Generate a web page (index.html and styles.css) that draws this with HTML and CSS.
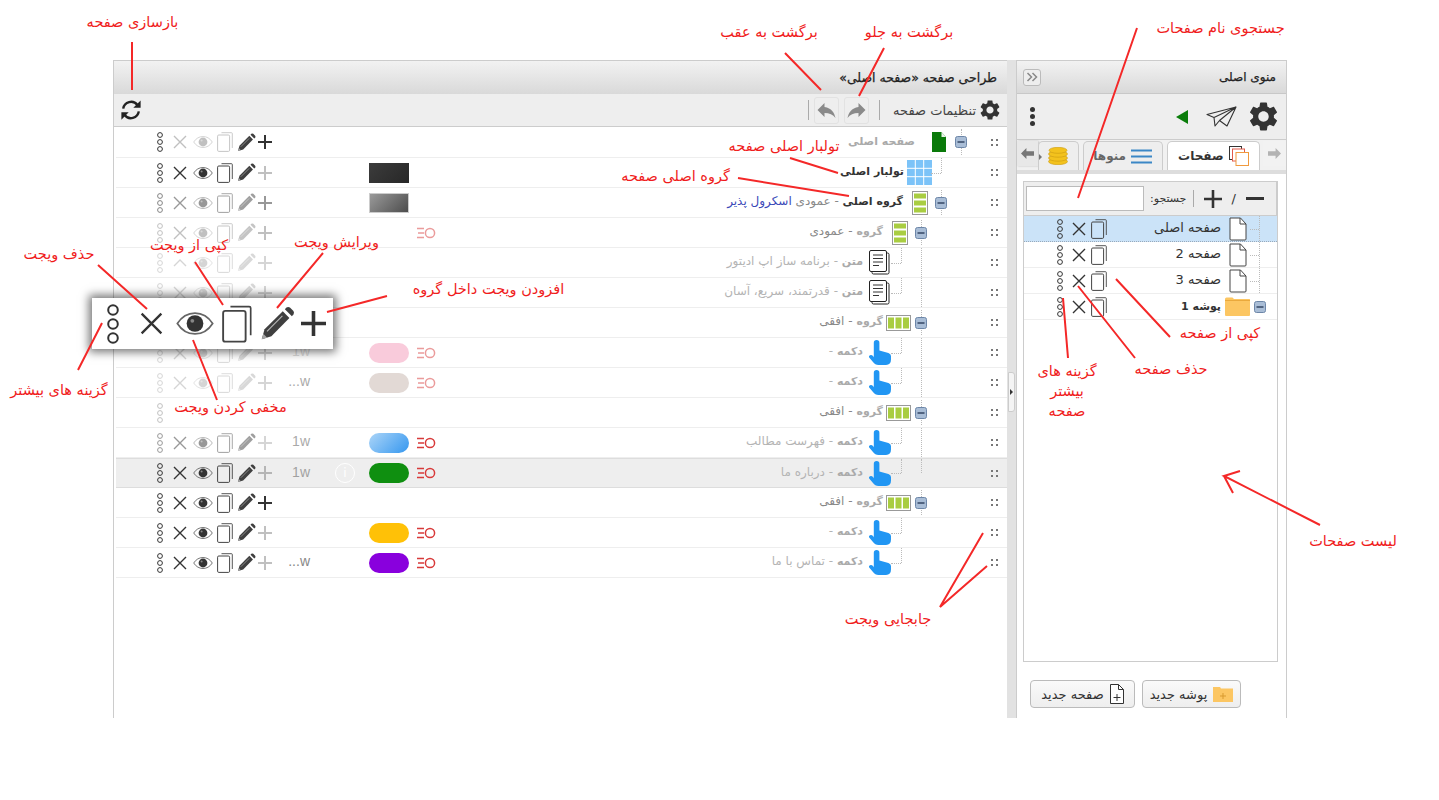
FILE: index.html
```html
<!DOCTYPE html>
<html lang="fa">
<head>
    <meta charset="UTF-8">
    <title>طراحی صفحه</title>
    <link rel="stylesheet" href="styles.css">
</head>
<body>

<svg class="defs" aria-hidden="true">
    <symbol id="gear" viewBox="2 2 20 20"><path d="M19.14 12.94c.04-.3.06-.61.06-.94 0-.32-.02-.64-.07-.94l2.03-1.58c.18-.14.23-.41.12-.61l-1.92-3.32c-.12-.22-.37-.29-.59-.22l-2.39.96c-.5-.38-1.03-.7-1.62-.94l-.36-2.54c-.04-.24-.24-.41-.48-.41h-3.84c-.24 0-.43.17-.47.41l-.36 2.54c-.59.24-1.13.57-1.62.94l-2.39-.96c-.22-.08-.47 0-.59.22L2.74 8.87c-.12.21-.08.47.12.61l2.03 1.58c-.05.3-.09.63-.09.94s.02.64.07.94l-2.03 1.58c-.18.14-.23.41-.12.61l1.92 3.32c.12.22.37.29.59.22l2.39-.96c.5.38 1.03.7 1.62.94l.36 2.54c.05.24.24.41.48.41h3.84c.24 0 .44-.17.47-.41l.36-2.54c.59-.24 1.13-.56 1.62-.94l2.39.96c.22.08.47 0 .59-.22l1.92-3.32c.12-.22.07-.47-.12-.61l-2.01-1.58zM12 15.6c-1.98 0-3.6-1.62-3.6-3.6s1.62-3.6 3.6-3.6 3.6 1.62 3.6 3.6-1.62 3.6-3.6 3.6z" fill="#333"/></symbol>
    <symbol id="dots" viewBox="0 0 10 20"><g fill="none" stroke="#333" stroke-width="1"><circle cx="5" cy="3" r="2.4"/><circle cx="5" cy="10" r="2.4"/><circle cx="5" cy="17" r="2.4"/></g></symbol>
    <symbol id="cross" viewBox="0 0 14 14"><path d="M1 1l12 12M13 1L1 13" stroke="#333" stroke-width="1.4" fill="none"/></symbol>
    <symbol id="eye" viewBox="0 0 20 14"><path d="M.7 7C3 3.4 6.300 1.500 10 1.500S17 3.400 19.300 7C17 10.600 13.700 12.500 10 12.500S3 10.600 .7 7z" fill="none" stroke="#666" stroke-width=".9"/><circle cx="10" cy="7" r="4.400" fill="#333"/><circle cx="8.600" cy="5.600" r="1" fill="#888"/></symbol>
    <symbol id="copy" viewBox="0 0 16 20"><path d="M4.500 .7h10q.8 0 .8 .8v14.500" fill="none" stroke="#444" stroke-width=".9"/><rect x=".6" y="3" width="12" height="16.400" rx="1.200" fill="#fff" fill-opacity="0" stroke="#444" stroke-width="1"/></symbol>
    <symbol id="pencil" viewBox="0 0 20 20"><path d="M1 19l1.600-5.700L13 3l3.800 3.800L6.500 17.300z" fill="#3f3f3f"/><path d="M4 14.500l8.800-8.800" stroke="#bbb" stroke-width=".6"/><path d="M1 19l.9-3.100 2.200 2.200z" fill="#a5a5a5"/><path d="M14.200 1.800l.9-.9q1-.7 2 0l2 2q.7 1 0 2l-.9.9z" fill="#3f3f3f"/></symbol>
    <symbol id="plus" viewBox="0 0 14 14"><path d="M7 0v14M0 7h14" stroke="#333" stroke-width="2" fill="none"/></symbol>
    <symbol id="caret" viewBox="0 0 14 14"><path d="M1 10l6-6 6 6" stroke="#333" stroke-width="1.400" fill="none"/></symbol>
    <symbol id="grip" viewBox="0 0 7 7"><path d="M0 0h2v2H0zM5 0h2v2H5zM0 5h2v2H0zM5 5h2v2H5z" fill="#777"/></symbol>
    <symbol id="minus" viewBox="0 0 12 12"><rect x=".5" y=".5" width="11" height="11" rx="2" fill="#a9bdd6" stroke="#6d86a8"/><path d="M2.500 6h7" stroke="#2c3e5c" stroke-width="1.400"/></symbol>
    <symbol id="anim" viewBox="0 0 19 14"><path d="M0 2.500h7M1 7h6M0 11.500h7" stroke="#d83a3a" stroke-width="1.400" fill="none"/><circle cx="13" cy="7" r="4.600" fill="none" stroke="#d83a3a" stroke-width="1.500"/></symbol>
    <symbol id="page" viewBox="0 0 18 24"><path d="M1 1h10.500L17 7v15q0 1-1 1H2q-1 0-1-1z" fill="#fff" stroke="#444" stroke-width="1"/><path d="M11 1v6h6" fill="none" stroke="#444" stroke-width="1"/></symbol>
    <symbol id="greenpage" viewBox="0 0 14 20"><path d="M0 0h9.500L14 5v15H0z" fill="#0a7a0a"/><path d="M9.500 0v5H14" fill="#e8f3e8"/></symbol>
    <symbol id="textdoc" viewBox="0 0 21 25"><rect x="3" y="3" width="17" height="21" rx="1.500" fill="#fff" stroke="#222"/><rect x=".5" y=".5" width="17" height="21" rx="1.500" fill="#fff" stroke="#222"/><path d="M4 5h10M4 8.500h10M4 12h10M4 15.500h6" stroke="#333"/></symbol>
    <symbol id="gridbox" viewBox="0 0 25 25"><path d="M0 0h25v25H0z" fill="#7cc3f8"/><path d="M8.300 0v25M16.700 0v25M0 8.300h25M0 16.700h25" stroke="#fff" stroke-width="1"/></symbol>
    <symbol id="vgroup" viewBox="0 0 16 24"><rect x=".5" y=".5" width="15" height="23" fill="#fff" stroke="#999"/><path d="M2 2.500h12V7.500H2zM2 9.500h12V14.500H2zM2 16.500h12V21.500H2z" fill="#a9cd41"/></symbol>
    <symbol id="hgroup" viewBox="0 0 25 16"><rect x=".5" y=".5" width="24" height="15" fill="#fff" stroke="#999"/><path d="M2 2.500h6v11H2zM9.500 2.500h6v11H9.500zM17 2.500h6v11h-6z" fill="#a9cd41"/></symbol>
    <symbol id="hand" viewBox="0 0 22 25"><path d="M4.800 2.800a2.800 2.800 0 0 1 5.600 0v7.600l9 2.600q2.600 .8 2.600 3v3.500q0 5-5 5.500H9.500q-3.500 0-5.500-3L.2 17.500q-.8-1.600.8-2.300t3 .8l.8 1.200z" fill="#2196f3"/></symbol>
    <symbol id="folder" viewBox="0 0 25 19"><path d="M0 2q0-1.500 1.500-1.500h6L9 2h15.500q.5 0 .5 .5V18q0 1-1 1H1q-1 0-1-1z" fill="#fcc662"/><path d="M0 3.500h25" stroke="#eaa93c"/></symbol>
    <symbol id="reply" viewBox="3 5 18 15"><path d="M10 9V5l-7 7 7 7v-4.100c5 0 8.500 1.600 11 5.100-1-5-4-10-11-11z" fill="#8a8a8a"/></symbol>
    <symbol id="refresh" viewBox="0 0 24 24"><g fill="none" stroke="#222" stroke-width="2.600"><path d="M3.500 10.500A8.700 8.700 0 0 1 19 6.500"/><path d="M20.500 13.500A8.700 8.700 0 0 1 5 17.500"/></g><path d="M22.500 1.500v8h-8zM1.500 22.500v-8h8z" fill="#222"/></symbol>
    <symbol id="plane" viewBox="0 0 31 21"><path d="M1 8.500L30 1l-9 19-7.500-5.500L9 20l-1-8.500zM30 1L8 11.500M30 1L13.500 14.500" fill="none" stroke="#333" stroke-width="1.100" stroke-linejoin="round"/></symbol>
    <symbol id="pages" viewBox="0 0 20 20"><rect x=".5" y=".5" width="12" height="13" fill="#fff" stroke="#333"/><rect x="3.500" y="3" width="12" height="12" fill="#fff" stroke="#e25b4a"/><rect x="7" y="6.500" width="12.500" height="13" fill="#fff" stroke="#f09a3e"/></symbol>
    <symbol id="menuicon" viewBox="0 0 21 15"><path d="M0 1.500h21M0 7.500h21M0 13.500h21" stroke="#3b87c6" stroke-width="2"/></symbol>
    <symbol id="coins" viewBox="0 0 20 18"><g fill="#f3c21d" stroke="#cb9a10" stroke-width=".6"><ellipse cx="10" cy="14.500" rx="9.500" ry="3.200"/><ellipse cx="10" cy="11" rx="9.500" ry="3.200"/><ellipse cx="10" cy="7" rx="9.500" ry="3.200"/><ellipse cx="10" cy="3.300" rx="9" ry="3"/></g></symbol>
    <symbol id="arrowh" viewBox="0 0 12 10"><path d="M0 5l5-5v3h7v4H5v3z" fill="#777"/></symbol>
    <symbol id="chev" viewBox="0 0 12 10"><path d="M1.500 1l4 4-4 4M6.500 1l4 4-4 4" fill="none" stroke="#888" stroke-width="1.500"/></symbol>
    <symbol id="newpage" viewBox="0 0 14 20"><path d="M.5 .5h8l5 5v14H.5z" fill="#fff" stroke="#333"/><path d="M8.500 .5v5h5M7 10v7M3.500 13.500h7" fill="none" stroke="#333"/></symbol>
    <symbol id="newfolder" viewBox="0 0 20 16"><path d="M0 1h7l1 1.500h12V16H0z" fill="#fcc662"/><path d="M10 7v6M7 10h6" stroke="#d99a2f"/></symbol>
</svg>

<div class="app">
    <section class="designer">
        <header class="title-bar"><span class="title title-long">طراحی صفحه «صفحه اصلی»</span></header>
        <div class="tool-bar">
            <svg class="refresh"><use href="#refresh"/></svg>
            <div class="tool-group">
                <span class="sep"></span>
                <span class="hist-btn"><svg class="hist"><use href="#reply"/></svg></span>
                <span class="hist-btn"><svg class="hist mirror"><use href="#reply"/></svg></span>
                <span class="sep sep-wide"></span>
                <span class="settings">تنظیمات صفحه</span>
                <svg class="gear"><use href="#gear"/></svg>
            </div>
        </div>

        <div class="rows">
            <div class="row row-first">
                <div class="acts">
                    <svg class="i-dots"><use href="#dots"/></svg><svg class="i-x o3"><use href="#cross"/></svg><svg class="i-eye o3"><use href="#eye"/></svg><svg class="i-copy o3"><use href="#copy"/></svg><svg class="i-pen"><use href="#pencil"/></svg><svg class="i-plus"><use href="#plus"/></svg>
                </div>
                <div class="size"></div><div class="info"></div><div class="swatch none"></div><div class="anim"></div>
                <div class="tree">
                    <svg class="grip"><use href="#grip"/></svg>
                    <span class="slot toggle"><svg class="tgl"><use href="#minus"/></svg></span>
                    <span class="ico ico-root"><svg class="i-green"><use href="#greenpage"/></svg></span>
                    <span class="lbl"><b class="muted">صفحه اصلی</b></span>
                </div>
            </div>

            <div class="row">
                <div class="acts">
                    <svg class="i-dots"><use href="#dots"/></svg><svg class="i-x"><use href="#cross"/></svg><svg class="i-eye"><use href="#eye"/></svg><svg class="i-copy"><use href="#copy"/></svg><svg class="i-pen"><use href="#pencil"/></svg><svg class="i-plus o3"><use href="#plus"/></svg>
                </div>
                <div class="size"></div><div class="info"></div><div class="swatch sw-dark"></div><div class="anim"></div>
                <div class="tree">
                    <svg class="grip"><use href="#grip"/></svg>
                    <span class="slot"></span>
                    <span class="slot stub"></span>
                    <span class="ico ico-grid"><svg class="i-grid"><use href="#gridbox"/></svg></span>
                    <span class="lbl"><b>تولبار اصلی</b></span>
                </div>
            </div>

            <div class="row">
                <div class="acts">
                    <svg class="i-dots o6"><use href="#dots"/></svg><svg class="i-x o5"><use href="#cross"/></svg><svg class="i-eye o5"><use href="#eye"/></svg><svg class="i-copy o5"><use href="#copy"/></svg><svg class="i-pen o5"><use href="#pencil"/></svg><svg class="i-plus o5"><use href="#plus"/></svg>
                </div>
                <div class="size"></div><div class="info"></div><div class="swatch sw-gray"></div><div class="anim"></div>
                <div class="tree">
                    <svg class="grip"><use href="#grip"/></svg>
                    <span class="slot"></span>
                    <span class="slot toggle"><svg class="tgl"><use href="#minus"/></svg></span>
                    <span class="ico"><svg class="i-v"><use href="#vgroup"/></svg></span>
                    <span class="lbl"><b>گروه اصلی</b> <span class="sub">- عمودی</span> <span class="link">اسکرول پذیر</span></span>
                </div>
            </div>

            <div class="row">
                <div class="acts">
                    <svg class="i-dots o3"><use href="#dots"/></svg><svg class="i-x o3"><use href="#cross"/></svg><svg class="i-eye o3"><use href="#eye"/></svg><svg class="i-copy o3"><use href="#copy"/></svg><svg class="i-pen o3"><use href="#pencil"/></svg><svg class="i-plus o3"><use href="#plus"/></svg>
                </div>
                <div class="size"></div><div class="info"></div><div class="swatch none"></div><svg class="anim o5"><use href="#anim"/></svg>
                <div class="tree">
                    <svg class="grip"><use href="#grip"/></svg>
                    <span class="slot"></span>
                    <span class="slot"></span>
                    <span class="slot toggle"><svg class="tgl"><use href="#minus"/></svg></span>
                    <span class="ico"><svg class="i-v"><use href="#vgroup"/></svg></span>
                    <span class="lbl"><b class="muted">گروه</b> <span class="sub">- عمودی</span></span>
                </div>
            </div>

            <div class="row">
                <div class="acts">
                    <svg class="i-dots o2"><use href="#dots"/></svg><svg class="i-x o2"><use href="#caret"/></svg><svg class="i-eye o2"><use href="#eye"/></svg><svg class="i-copy o2"><use href="#copy"/></svg><svg class="i-pen o2"><use href="#pencil"/></svg><svg class="i-plus o2"><use href="#plus"/></svg>
                </div>
                <div class="size"></div><div class="info"></div><div class="swatch none"></div><div class="anim"></div>
                <div class="tree">
                    <svg class="grip"><use href="#grip"/></svg>
                    <span class="slot"></span>
                    <span class="slot"></span>
                    <span class="slot line"></span>
                    <span class="slot stub"></span>
                    <span class="ico ico-text"><svg class="i-text"><use href="#textdoc"/></svg></span>
                    <span class="lbl faded"><b class="muted">متن</b> - برنامه ساز اپ ادیتور</span>
                </div>
            </div>

            <div class="row">
                <div class="acts">
                    <svg class="i-dots o2"><use href="#dots"/></svg><svg class="i-x o2"><use href="#cross"/></svg><svg class="i-eye o2"><use href="#eye"/></svg><svg class="i-copy o2"><use href="#copy"/></svg><svg class="i-pen o2"><use href="#pencil"/></svg><svg class="i-plus o2"><use href="#plus"/></svg>
                </div>
                <div class="size"></div><div class="info"></div><div class="swatch none"></div><div class="anim"></div>
                <div class="tree">
                    <svg class="grip"><use href="#grip"/></svg>
                    <span class="slot"></span>
                    <span class="slot"></span>
                    <span class="slot line"></span>
                    <span class="slot stub"></span>
                    <span class="ico ico-text"><svg class="i-text"><use href="#textdoc"/></svg></span>
                    <span class="lbl faded"><b class="muted">متن</b> - قدرتمند، سریع، آسان</span>
                </div>
            </div>

            <div class="row">
                <div class="acts"></div>
                <div class="size"></div><div class="info"></div><div class="swatch none"></div><div class="anim"></div>
                <div class="tree">
                    <svg class="grip"><use href="#grip"/></svg>
                    <span class="slot"></span>
                    <span class="slot"></span>
                    <span class="slot toggle"><svg class="tgl"><use href="#minus"/></svg></span>
                    <span class="ico ico-h"><svg class="i-h"><use href="#hgroup"/></svg></span>
                    <span class="lbl"><b class="muted">گروه</b> <span class="sub">- افقی</span></span>
                </div>
            </div>

            <div class="row">
                <div class="acts">
                    <svg class="i-dots o2"><use href="#dots"/></svg><svg class="i-x o2"><use href="#cross"/></svg><svg class="i-eye o2"><use href="#eye"/></svg><svg class="i-copy o2"><use href="#copy"/></svg><svg class="i-pen o2"><use href="#pencil"/></svg><svg class="i-plus o2"><use href="#plus"/></svg>
                </div>
                <div class="size o2">1w</div><div class="info"></div><div class="swatch sw-pink"></div><svg class="anim o5"><use href="#anim"/></svg>
                <div class="tree">
                    <svg class="grip"><use href="#grip"/></svg>
                    <span class="slot"></span>
                    <span class="slot"></span>
                    <span class="slot line"></span>
                    <span class="slot stub"></span>
                    <span class="ico ico-hand"><svg class="i-hand"><use href="#hand"/></svg></span>
                    <span class="lbl faded"><b class="muted">دکمه</b> -</span>
                </div>
            </div>

            <div class="row">
                <div class="acts">
                    <svg class="i-dots o2"><use href="#dots"/></svg><svg class="i-x o2"><use href="#cross"/></svg><svg class="i-eye o2"><use href="#eye"/></svg><svg class="i-copy o2"><use href="#copy"/></svg><svg class="i-pen o2"><use href="#pencil"/></svg><svg class="i-plus o2"><use href="#plus"/></svg>
                </div>
                <div class="size o5">...w</div><div class="info"></div><div class="swatch sw-sand"></div><svg class="anim o5"><use href="#anim"/></svg>
                <div class="tree">
                    <svg class="grip"><use href="#grip"/></svg>
                    <span class="slot"></span>
                    <span class="slot"></span>
                    <span class="slot line"></span>
                    <span class="slot stub"></span>
                    <span class="ico ico-hand"><svg class="i-hand"><use href="#hand"/></svg></span>
                    <span class="lbl faded"><b class="muted">دکمه</b> -</span>
                </div>
            </div>

            <div class="row">
                <div class="acts">
                    <svg class="i-dots o3"><use href="#dots"/></svg>
                </div>
                <div class="size"></div><div class="info"></div><div class="swatch none"></div><div class="anim"></div>
                <div class="tree">
                    <svg class="grip"><use href="#grip"/></svg>
                    <span class="slot"></span>
                    <span class="slot"></span>
                    <span class="slot toggle"><svg class="tgl"><use href="#minus"/></svg></span>
                    <span class="ico ico-h"><svg class="i-h"><use href="#hgroup"/></svg></span>
                    <span class="lbl"><b class="muted">گروه</b> <span class="sub">- افقی</span></span>
                </div>
            </div>

            <div class="row">
                <div class="acts">
                    <svg class="i-dots o5"><use href="#dots"/></svg><svg class="i-x o5"><use href="#cross"/></svg><svg class="i-eye o5"><use href="#eye"/></svg><svg class="i-copy o5"><use href="#copy"/></svg><svg class="i-pen o5"><use href="#pencil"/></svg><svg class="i-plus o2"><use href="#plus"/></svg>
                </div>
                <div class="size o5">1w</div><div class="info"></div><div class="swatch sw-blue"></div><svg class="anim"><use href="#anim"/></svg>
                <div class="tree">
                    <svg class="grip"><use href="#grip"/></svg>
                    <span class="slot"></span>
                    <span class="slot"></span>
                    <span class="slot line"></span>
                    <span class="slot stub"></span>
                    <span class="ico ico-hand"><svg class="i-hand"><use href="#hand"/></svg></span>
                    <span class="lbl faded"><b class="muted">دکمه</b> - فهرست مطالب</span>
                </div>
            </div>

            <div class="row row-hover">
                <div class="acts">
                    <svg class="i-dots"><use href="#dots"/></svg><svg class="i-x"><use href="#cross"/></svg><svg class="i-eye"><use href="#eye"/></svg><svg class="i-copy"><use href="#copy"/></svg><svg class="i-pen"><use href="#pencil"/></svg><svg class="i-plus o3"><use href="#plus"/></svg>
                </div>
                <div class="size o5">1w</div><div class="info"><span class="info-dot">i</span></div><div class="swatch sw-green"></div><svg class="anim"><use href="#anim"/></svg>
                <div class="tree">
                    <svg class="grip"><use href="#grip"/></svg>
                    <span class="slot"></span>
                    <span class="slot"></span>
                    <span class="slot line-end"></span>
                    <span class="slot stub"></span>
                    <span class="ico ico-hand"><svg class="i-hand"><use href="#hand"/></svg></span>
                    <span class="lbl faded"><b class="muted">دکمه</b> - درباره ما</span>
                </div>
            </div>

            <div class="row">
                <div class="acts">
                    <svg class="i-dots"><use href="#dots"/></svg><svg class="i-x"><use href="#cross"/></svg><svg class="i-eye"><use href="#eye"/></svg><svg class="i-copy"><use href="#copy"/></svg><svg class="i-pen"><use href="#pencil"/></svg><svg class="i-plus"><use href="#plus"/></svg>
                </div>
                <div class="size"></div><div class="info"></div><div class="swatch none"></div><div class="anim"></div>
                <div class="tree">
                    <svg class="grip"><use href="#grip"/></svg>
                    <span class="slot"></span>
                    <span class="slot"></span>
                    <span class="slot toggle"><svg class="tgl"><use href="#minus"/></svg></span>
                    <span class="ico ico-h"><svg class="i-h"><use href="#hgroup"/></svg></span>
                    <span class="lbl"><b class="muted">گروه</b> <span class="sub">- افقی</span></span>
                </div>
            </div>

            <div class="row">
                <div class="acts">
                    <svg class="i-dots"><use href="#dots"/></svg><svg class="i-x"><use href="#cross"/></svg><svg class="i-eye"><use href="#eye"/></svg><svg class="i-copy"><use href="#copy"/></svg><svg class="i-pen"><use href="#pencil"/></svg><svg class="i-plus o3"><use href="#plus"/></svg>
                </div>
                <div class="size"></div><div class="info"></div><div class="swatch sw-amber"></div><svg class="anim"><use href="#anim"/></svg>
                <div class="tree">
                    <svg class="grip"><use href="#grip"/></svg>
                    <span class="slot"></span>
                    <span class="slot"></span>
                    <span class="slot"></span>
                    <span class="slot stub"></span>
                    <span class="ico ico-hand"><svg class="i-hand"><use href="#hand"/></svg></span>
                    <span class="lbl faded"><b class="muted">دکمه</b> -</span>
                </div>
            </div>

            <div class="row">
                <div class="acts">
                    <svg class="i-dots"><use href="#dots"/></svg><svg class="i-x"><use href="#cross"/></svg><svg class="i-eye"><use href="#eye"/></svg><svg class="i-copy"><use href="#copy"/></svg><svg class="i-pen"><use href="#pencil"/></svg><svg class="i-plus o3"><use href="#plus"/></svg>
                </div>
                <div class="size dark">...w</div><div class="info"></div><div class="swatch sw-purple"></div><svg class="anim"><use href="#anim"/></svg>
                <div class="tree">
                    <svg class="grip"><use href="#grip"/></svg>
                    <span class="slot"></span>
                    <span class="slot"></span>
                    <span class="slot"></span>
                    <span class="slot stub"></span>
                    <span class="ico ico-hand"><svg class="i-hand"><use href="#hand"/></svg></span>
                    <span class="lbl faded"><b class="muted">دکمه</b> - تماس با ما</span>
                </div>
            </div>
        </div>
    </section>

    <div class="splitter"><span class="split-tab"></span></div>

    <aside class="side">
        <header class="title-bar side-title">
            <span class="collapse"><svg class="chev"><use href="#chev"/></svg></span>
            <span class="title">منوی اصلی</span>
        </header>
        <div class="side-tools">
            <span class="more-dots"></span>
            <div class="side-tools-r">
                <span class="play"></span>
                <svg class="plane"><use href="#plane"/></svg>
                <svg class="side-gear"><use href="#gear"/></svg>
            </div>
        </div>
        <div class="tabs">
            <span class="tab-arrow tab-arrow-l"><svg class="arr"><use href="#arrowh"/></svg></span>
            <span class="tab tab-coins"><svg class="t-coins"><use href="#coins"/></svg></span>
            <span class="tab tab-menus">منوها <svg class="t-menu"><use href="#menuicon"/></svg></span>
            <span class="tab tab-pages">صفحات <svg class="t-pages"><use href="#pages"/></svg></span>
            <span class="tab-arrow tab-arrow-r"><svg class="arr arr-r"><use href="#arrowh"/></svg></span>
        </div>
        <div class="tab-line"></div>
        <div class="pane">
            <div class="list-box">
                <div class="search-bar">
                    <input class="search" type="text" aria-label="جستجو">
                    <span class="search-lbl">جستجو:</span>
                    <span class="sep2"></span>
                    <svg class="big-plus"><use href="#plus"/></svg>
                    <span class="slash">/</span>
                    <span class="big-minus"></span>
                </div>
                <div class="page-row page-on">
                    <svg class="i-dots"><use href="#dots"/></svg><svg class="p-x"><use href="#cross"/></svg><svg class="p-copy"><use href="#copy"/></svg>
                    <span class="page-name">صفحه اصلی</span>
                    <svg class="i-page"><use href="#page"/></svg>
                    <span class="page-stub"></span>
                </div>
                <div class="page-row">
                    <svg class="i-dots"><use href="#dots"/></svg><svg class="p-x"><use href="#cross"/></svg><svg class="p-copy"><use href="#copy"/></svg>
                    <span class="page-name">صفحه 2</span>
                    <svg class="i-page"><use href="#page"/></svg>
                    <span class="page-stub"></span>
                </div>
                <div class="page-row">
                    <svg class="i-dots"><use href="#dots"/></svg><svg class="p-x"><use href="#cross"/></svg><svg class="p-copy"><use href="#copy"/></svg>
                    <span class="page-name">صفحه 3</span>
                    <svg class="i-page"><use href="#page"/></svg>
                    <span class="page-stub"></span>
                </div>
                <div class="page-row">
                    <svg class="i-dots"><use href="#dots"/></svg><svg class="p-x"><use href="#cross"/></svg><svg class="p-copy"><use href="#copy"/></svg>
                    <span class="page-name folder-name"><b>پوشه 1</b></span>
                    <svg class="i-folder"><use href="#folder"/></svg>
                    <svg class="p-tgl"><use href="#minus"/></svg>
                </div>
            </div>
            <div class="new-btns">
                <button class="btn">صفحه جدید <svg class="b-page"><use href="#newpage"/></svg></button>
                <button class="btn">پوشه جدید <svg class="b-folder"><use href="#newfolder"/></svg></button>
            </div>
        </div>
    </aside>
</div>

<!-- callout over the rows -->
<div class="callout">
    <svg class="c-dots"><use href="#dots"/></svg>
    <svg class="c-x"><use href="#cross"/></svg>
    <svg class="c-eye"><use href="#eye"/></svg>
    <svg class="c-copy"><use href="#copy"/></svg>
    <svg class="c-pen"><use href="#pencil"/></svg>
    <svg class="c-plus"><use href="#plus"/></svg>
</div>

<svg class="lines" viewBox="0 0 1439 800" aria-hidden="true">
    <path d="M132 42V90M785 53L821 90M884 48L859 96M1137 28L1078 198M790 158L838 173M738 178L849 196M1116 279L1170 337M1078 286L1135 358M1063 298L1068 358M1320 525L1224 476L1240 471M1224 476L1233 493M983 533L940 607L987 566M98 265L147 309M195 262L223 305M323 253L277 308M387 296L327 312M102 323L78 370M193 340L217 400" fill="none" stroke="#f42828" stroke-width="2"/>
</svg>

<span class="note n-reload">بازسازی صفحه</span>
<span class="note n-back">برگشت به عقب</span>
<span class="note n-fwd">برگشت به جلو</span>
<span class="note n-search">جستجوی نام صفحات</span>
<span class="note n-toolbar">تولبار اصلی صفحه</span>
<span class="note n-group">گروه اصلی صفحه</span>
<span class="note n-edit">ویرایش ویجت</span>
<span class="note n-copy">کپی از ویجت</span>
<span class="note n-del">حذف ویجت</span>
<span class="note n-add">افزودن ویجت داخل گروه</span>
<span class="note n-more">گزینه های بیشتر</span>
<span class="note n-hide">مخفی کردن ویجت</span>
<span class="note n-pcopy">کپی از صفحه</span>
<span class="note n-pdel">حذف صفحه</span>
<span class="note n-pmore">گزینه های<br>بیشتر<br>صفحه</span>
<span class="note n-list">لیست صفحات</span>
<span class="note n-move">جابجایی ویجت</span>

</body>
</html>
```

FILE: styles.css
```css
html, body {
    margin: 0;
    height: 800px;
    overflow: hidden;
    background-color: #fff;
}
body {
    position: relative;
    font-family: "DejaVu Sans", sans-serif;
    font-size: 11px;
    color: #333;
}
svg {
    display: block;
    flex: none;
}
.defs {
    width: 0;
    height: 0;
    position: absolute;
}
.o2 { opacity: 0.2; }
.o3 { opacity: 0.3; }
.o5 { opacity: 0.5; }
.o6 { opacity: 0.6; }

.app {
    display: flex;
    width: 1174px;
    height: 658px;
    margin: 60px 0 0 113px;
}

/* designer panel */
.designer {
    width: 894px;
    box-sizing: border-box;
    border-left: 1px solid #ccc;
}
.title-bar {
    height: 34px;
    flex: none;
    box-sizing: border-box;
    border-top: 1px solid #ccc;
    background: linear-gradient(#f2f2f2, #d9d9d9);
    display: flex;
    align-items: center;
    justify-content: flex-end;
    padding-right: 10px;
}
.title {
    direction: rtl;
    font-size: 12px;
    color: #222;
    -webkit-text-stroke: 0.25px #222;
}
.title-long {
    font-size: 12.5px;
}
.tool-bar {
    height: 33px;
    box-sizing: border-box;
    background-color: #eee;
    border-bottom: 1px solid #ccc;
    display: flex;
    align-items: center;
    justify-content: space-between;
    padding: 0 7px 0 6px;
}
.refresh {
    width: 22px;
    height: 22px;
}
.tool-group {
    display: flex;
    align-items: center;
}
.sep {
    width: 1px;
    height: 20px;
    background-color: #aaa;
    margin-right: 5px;
}
.sep-wide {
    margin: 0 13px 0 5px;
}
.hist-btn {
    width: 25px;
    height: 27px;
    box-sizing: border-box;
    border: 1px solid #e2e2e2;
    border-radius: 3px;
    margin-right: 5px;
    display: flex;
    align-items: center;
    justify-content: center;
}
.hist {
    width: 19px;
    height: 15px;
}
.mirror {
    transform: scaleX(-1);
}
.settings {
    direction: rtl;
    font-size: 13px;
    color: #444;
    margin-right: 4px;
}
.gear {
    width: 20px;
    height: 20px;
}

/* widget rows */
.row {
    height: 30px;
    box-sizing: border-box;
    border-bottom: 1px solid #eee;
    display: flex;
    align-items: center;
    margin-left: 2px;
}
.row-first {
    height: 31px;
}
.row-hover {
    background-color: #eee;
    border-top: 1px solid #ddd;
    border-bottom-color: #ddd;
}
.acts {
    width: 156px;
    padding-left: 39px;
    box-sizing: border-box;
    display: flex;
    align-items: center;
    flex: none;
}
.i-dots { width: 10px; height: 20px; }
.i-x { width: 14px; height: 14px; margin-left: 8px; }
.i-eye { width: 20px; height: 14px; margin-left: 6px; }
.i-copy { width: 16px; height: 20px; margin-left: 4px; }
.i-pen { width: 19px; height: 19px; margin-left: 4px; }
.i-plus { width: 14px; height: 14px; margin-left: 2px; }
.size {
    width: 40px;
    flex: none;
    font-family: "Liberation Sans", sans-serif;
    font-size: 14px;
    text-align: right;
    padding-right: 2px;
    box-sizing: border-box;
    color: #555;
    margin-bottom: 3px;
}
.size.dark { color: #888; }
.info {
    width: 57px;
    flex: none;
    display: flex;
    justify-content: center;
    padding-left: 9px;
    box-sizing: border-box;
}
.info-dot {
    width: 20px;
    height: 20px;
    box-sizing: border-box;
    border: 1px solid #fff;
    border-radius: 50%;
    color: #fff;
    text-align: center;
    line-height: 18px;
    font-size: 12px;
}
.swatch {
    width: 40px;
    height: 20px;
    flex: none;
    box-sizing: border-box;
    border-radius: 10px;
}
.none { visibility: hidden; }
.sw-dark { border-radius: 0; background: linear-gradient(135deg, #3c3c3c, #272727); }
.sw-gray { border-radius: 0; border: 1px solid #ccc; background: linear-gradient(135deg, #9a9a9a, #4d4d4d); }
.sw-pink { background-color: #f9cbdb; }
.sw-sand { background-color: #e2d9d5; }
.sw-blue { background: linear-gradient(135deg, #acd5f8, #3597ef); }
.sw-green { background-color: #0f8f10; }
.sw-amber { background-color: #ffc107; }
.sw-purple { background-color: #8900dd; }
.anim {
    width: 19px;
    height: 14px;
    margin-left: 8px;
    flex: none;
}
.tree {
    flex: 1;
    height: 100%;
    display: flex;
    flex-direction: row-reverse;
    align-items: center;
}
.grip {
    width: 7px;
    height: 7px;
    margin: 0 9px 0 20px;
}
.slot {
    width: 20px;
    height: 100%;
    flex: none;
    position: relative;
    display: flex;
    align-items: center;
    justify-content: center;
}
.line::before, .toggle::before, .stub::before, .line-end::before {
    content: "";
    position: absolute;
    left: 10px;
    top: 0;
    bottom: 0;
    border-left: 1px dotted #bbb;
}
.toggle::before {
    top: 2px;
    bottom: 2px;
}
.stub::before, .line-end::before {
    bottom: 50%;
}
.stub::after {
    content: "";
    position: absolute;
    left: 0;
    right: 10px;
    top: 50%;
    border-top: 1px dotted #bbb;
}
.tgl {
    width: 12px;
    height: 12px;
    position: relative;
}
.ico {
    width: 28px;
    flex: none;
    display: flex;
    justify-content: flex-end;
    align-items: center;
    padding-right: 3px;
    box-sizing: border-box;
}
.ico-root { width: 36px; padding-right: 5px; }
.ico-grid { padding-right: 0; margin-right: -1px; }
.ico-text { padding-right: 1px; }
.ico-h { padding-right: 0; }
.ico-hand { padding-right: 0; }
.i-green { width: 14px; height: 20px; }
.i-grid { width: 25px; height: 25px; }
.i-v { width: 16px; height: 24px; }
.i-h { width: 25px; height: 16px; }
.i-text { width: 21px; height: 25px; }
.i-hand { width: 22px; height: 25px; }
.lbl {
    direction: rtl;
    white-space: nowrap;
    font-size: 12px;
    color: #333;
    margin-bottom: 3px;
}
.lbl b { font-size: 11px; }
.muted { color: #aaa; }
.sub { color: #888; }
.link { color: #3b49b8; }
.faded { color: #b4b4b4; }

/* splitter */
.splitter {
    width: 9px;
    background-color: #e2e2e2;
    position: relative;
}
.split-tab {
    position: absolute;
    left: 1px;
    top: 312px;
    width: 7px;
    height: 40px;
    box-sizing: border-box;
    border-radius: 0 3px 3px 0;
    background-color: #f4f4f4;
    border: 1px solid #ccc;
}
.split-tab::after {
    content: "";
    position: absolute;
    left: 1px;
    top: 16px;
    border-left: 3px solid #333;
    border-top: 3px solid transparent;
    border-bottom: 3px solid transparent;
}

/* main menu panel */
.side {
    width: 271px;
    box-sizing: border-box;
    border-left: 1px solid #ccc;
    border-right: 1px solid #ccc;
    display: flex;
    flex-direction: column;
}
.side-title {
    justify-content: space-between;
    padding: 0 10px 0 6px;
    border-bottom: 1px solid #c8c8c8;
}
.collapse {
    width: 18px;
    height: 17px;
    box-sizing: border-box;
    border: 1px solid #bbb;
    border-radius: 3px;
    background-color: #eee;
    display: flex;
    align-items: center;
    justify-content: center;
}
.chev {
    width: 12px;
    height: 10px;
}
.side-tools {
    height: 46px;
    flex: none;
    box-sizing: border-box;
    background-color: #eee;
    border-bottom: 1px solid #ccc;
    display: flex;
    align-items: center;
    justify-content: space-between;
    padding: 0 8px 0 13px;
}
.more-dots {
    width: 5px;
    height: 5px;
    border-radius: 50%;
    background-color: #333;
    box-shadow: 0 -7px 0 #333, 0 7px 0 #333;
}
.side-tools-r {
    display: flex;
    align-items: center;
}
.play {
    border-right: 12px solid #0a7d0a;
    border-top: 7px solid transparent;
    border-bottom: 7px solid transparent;
    margin-right: 18px;
}
.plane {
    width: 31px;
    height: 21px;
    margin-right: 12px;
}
.side-gear {
    width: 29px;
    height: 29px;
}
.tabs {
    height: 30px;
    flex: none;
    display: flex;
    align-items: flex-end;
    background-color: #f1f1f1;
    position: relative;
    padding-left: 21px;
}
.tab {
    height: 29px;
    box-sizing: border-box;
    border: 1px solid #ccc;
    border-bottom: none;
    border-radius: 5px 5px 0 0;
    background-color: #eee;
    display: flex;
    align-items: center;
    justify-content: center;
    gap: 5px;
    font-size: 12px;
    font-weight: bold;
    color: #666;
}
.tab-coins {
    width: 41px;
    margin-right: 4px;
    padding-left: 9px;
    justify-content: flex-start;
    position: relative;
}
.tab-coins::before {
    content: "";
    position: absolute;
    left: 0;
    top: 12px;
    border-left: 3px solid #777;
    border-top: 3px solid transparent;
    border-bottom: 3px solid transparent;
}
.tab-menus { width: 80px; margin-right: 4px; }
.tab-pages {
    width: 94px;
    margin-right: 3px;
    background-color: #fff;
    color: #333;
}
.t-coins { width: 20px; height: 18px; }
.t-menu { width: 21px; height: 15px; }
.t-pages { width: 20px; height: 20px; }
.tab-arrow {
    width: 21px;
    height: 25px;
    display: flex;
    align-items: center;
    justify-content: center;
    margin-bottom: 4px;
}
.tab-arrow-l {
    position: absolute;
    left: 0;
    top: 1px;
    background-color: #e8e8e8;
    box-shadow: 1px 0 2px rgba(0, 0, 0, 0.2);
}
.tab-arrow-r {
    width: 23px;
    opacity: 0.5;
    background-color: #f4f4f4;
}
.arr { width: 13px; height: 11px; }
.arr-r { transform: scaleX(-1); }
.tab-line {
    height: 4px;
    background-color: #ddd;
    flex: none;
}
.pane {
    flex: 1;
    padding: 7px 8px 0 6px;
}
.list-box {
    height: 481px;
    box-sizing: border-box;
    border: 1px solid #ccc;
    border-top-width: 0;
}
.search-bar {
    height: 35px;
    box-sizing: border-box;
    margin-left: -1px;
    border: 1px solid #ccc;
    background-color: #eee;
    display: flex;
    align-items: center;
    padding: 0 8px 0 2px;
}
.search {
    width: 118px;
    height: 25px;
    box-sizing: border-box;
    border: 1px solid #bbb;
    padding: 0;
    background-color: #fff;
}
.search-lbl {
    direction: rtl;
    font-size: 11px;
    margin-left: 6px;
}
.sep2 {
    width: 1px;
    height: 17px;
    background-color: #aaa;
    margin: 0 10px 0 7px;
}
.big-plus {
    width: 18px;
    height: 18px;
}
.slash {
    margin-left: 9px;
    font-size: 13px;
}
.big-minus {
    width: 18px;
    height: 3px;
    background-color: #333;
    margin-left: 10px;
}
.page-row {
    height: 26px;
    box-sizing: border-box;
    border-bottom: 1px solid #eee;
    display: flex;
    align-items: center;
    padding-left: 31px;
}
.page-on {
    background-color: #cbe3f8;
    border-bottom: 1px dotted #9ab;
}
.p-x {
    width: 14px;
    height: 14px;
    margin-left: 7px;
}
.p-copy {
    width: 16px;
    height: 20px;
    margin-left: 5px;
}
.page-name {
    flex: 1;
    direction: rtl;
    font-size: 13px;
    padding-right: 8px;
    margin-bottom: 3px;
}
.page-name b { font-size: 11px; }
.folder-name { padding-right: 4px; }
.i-page {
    width: 18px;
    height: 24px;
}
.page-stub {
    width: 30px;
    height: 100%;
    position: relative;
}
.page-stub::before {
    content: "";
    position: absolute;
    left: 12px;
    top: 0;
    bottom: 0;
    border-left: 1px dotted #bbb;
}
.page-stub::after {
    content: "";
    position: absolute;
    left: 3px;
    width: 9px;
    top: 50%;
    border-top: 1px dotted #bbb;
}
.i-folder {
    width: 25px;
    height: 19px;
}
.p-tgl {
    width: 12px;
    height: 12px;
    margin: 0 11px 0 4px;
}
.new-btns {
    display: flex;
    gap: 7px;
    padding: 18px 0 0 7px;
}
.btn {
    height: 28px;
    box-sizing: border-box;
    padding: 0;
    border: 1px solid #bbb;
    border-radius: 4px;
    background: linear-gradient(#fafafa, #eee);
    font-family: inherit;
    font-size: 13px;
    color: #333;
    display: flex;
    align-items: center;
    justify-content: center;
    gap: 6px;
}
.btn:first-child { width: 105px; }
.btn:last-child { width: 99px; }
.b-page { width: 14px; height: 20px; }
.b-folder { width: 20px; height: 16px; }

/* callout + annotation layer */
.callout {
    position: absolute;
    left: 92px;
    top: 298px;
    width: 241px;
    height: 51px;
    box-sizing: border-box;
    background-color: #fff;
    box-shadow: 0 0 9px 3px rgba(0, 0, 0, 0.55);
    display: flex;
    align-items: center;
    padding-left: 11px;
}
.c-dots { width: 20px; height: 40px; }
.c-x { width: 23px; height: 23px; margin-left: 17px; }
.c-eye { width: 38px; height: 27px; margin-left: 13px; }
.c-copy { width: 30px; height: 38px; margin-left: 8px; }
.c-pen { width: 35px; height: 35px; margin-left: 8px; }
.c-plus { width: 25px; height: 25px; margin-left: 6px; }
.lines {
    position: absolute;
    left: 0;
    top: 0;
    width: 1439px;
    height: 800px;
    pointer-events: none;
}
.note {
    position: absolute;
    direction: rtl;
    color: #f01c1c;
    font-size: 14.5px;
    line-height: 20px;
    text-align: center;
    white-space: nowrap;
}
.n-reload { left: 86px; top: 12px; width: 93px; }
.n-back { left: 720px; top: 22px; width: 98px; }
.n-fwd { left: 864px; top: 22px; width: 90px; }
.n-search { left: 1151px; top: 18px; width: 139px; }
.n-toolbar { left: 722px; top: 136px; width: 124px; }
.n-group { left: 621px; top: 166px; width: 109px; }
.n-edit { left: 290px; top: 232px; width: 93px; }
.n-copy { left: 148px; top: 235px; width: 82px; }
.n-del { left: 20px; top: 244px; width: 78px; }
.n-add { left: 410px; top: 279px; width: 157px; }
.n-more { left: 8px; top: 380px; width: 102px; }
.n-hide { left: 171px; top: 397px; width: 119px; }
.n-pcopy { left: 1179px; top: 323px; width: 82px; }
.n-pdel { left: 1132px; top: 359px; width: 78px; }
.n-pmore { left: 1030px; top: 361px; width: 74px; }
.n-list { left: 1306px; top: 531px; width: 94px; }
.n-move { left: 838px; top: 609px; width: 100px; }
```
